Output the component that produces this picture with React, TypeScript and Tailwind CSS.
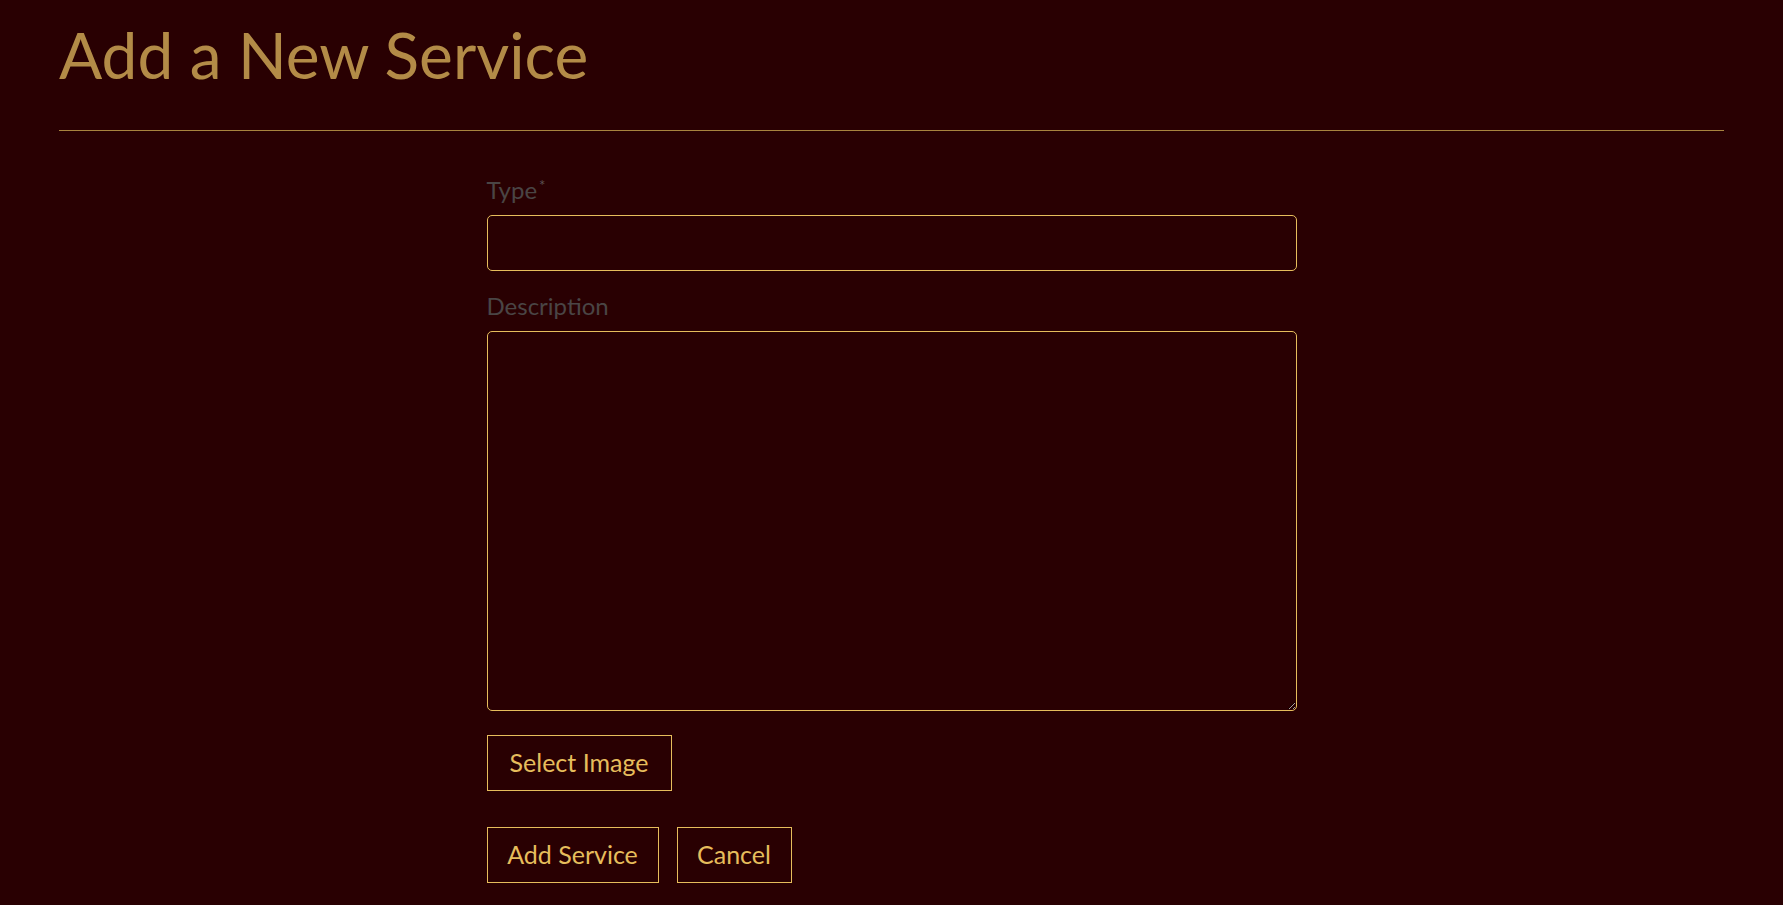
import { useState } from 'react'

const font = { fontFamily: 'Lato, "Open Sans", sans-serif' }

export default function App() {
  const [type, setType] = useState('')
  const [description, setDescription] = useState('')

  return (
    <div className="min-h-screen bg-[#290002] px-[59px]" style={font}>
      <h1 className="pt-[18px] pb-[38px] text-[64px] leading-[74px] font-normal text-[#b38b47]">Add a New Service</h1>
      <hr className="border-0 border-t border-[#a8843f]" />

      <form className="mx-auto w-[810px] pt-[44px]" onSubmit={(e) => e.preventDefault()}>
        <label className="block text-[24px] leading-[30px] text-[#4a4545]">
          Type<span className="relative -top-[8px] ml-[2px] text-[15px] text-[#5a5353]">*</span>
        </label>
        <input
          value={type}
          onChange={(e) => setType(e.target.value)}
          className="mt-[7px] block h-[56px] w-full rounded-[5px] border border-[#e6bd5c] bg-transparent px-3 text-[22px] text-[#e6bd5c] outline-none"
        />

        <label className="mt-[20px] block text-[24px] leading-[30px] text-[#4a4545]">Description</label>
        <textarea
          value={description}
          onChange={(e) => setDescription(e.target.value)}
          className="mt-[10px] block h-[380px] w-full rounded-[5px] border border-[#e6bd5c] bg-transparent px-3 py-2 text-[22px] text-[#e6bd5c] outline-none"
        />

        <button type="button" className="mt-[24px] block h-[56px] w-[185px] border border-[#e6bd5c] text-[25px] text-[#e6bd5c]">
          Select Image
        </button>

        <div className="mt-[36px] flex gap-[18px]">
          <button type="submit" className="h-[56px] w-[172px] border border-[#e6bd5c] text-[25px] text-[#e6bd5c]">
            Add Service
          </button>
          <button type="button" className="h-[56px] w-[115px] border border-[#e6bd5c] text-[25px] text-[#e6bd5c]">
            Cancel
          </button>
        </div>
      </form>
    </div>
  )
}
